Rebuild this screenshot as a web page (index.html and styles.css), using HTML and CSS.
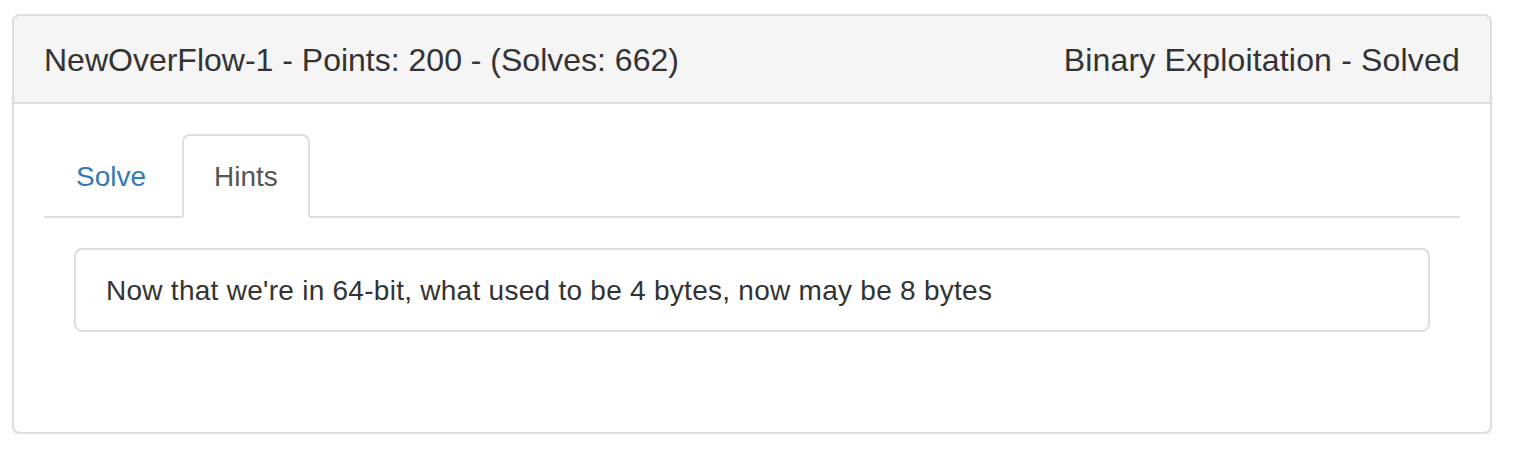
FILE: index.html
```html
<!DOCTYPE html>
<html>
<head>
<meta charset="utf-8">
<link rel="stylesheet" href="styles.css">
</head>
<body>
<div class="panel">
  <div class="panel-heading">
    <span class="title">NewOverFlow-1 - Points: 200 - (Solves: 662)</span>
    <span class="title title-right">Binary Exploitation - Solved</span>
  </div>
  <div class="panel-body">
    <ul class="nav-tabs">
      <li><a class="tab">Solve</a></li>
      <li><a class="tab active">Hints</a></li>
    </ul>
    <div class="tab-content">
      <div class="hint">Now that we're in 64-bit, what used to be 4 bytes, now may be 8 bytes</div>
    </div>
  </div>
</div>
</body>
</html>
```
FILE: styles.css
```css
html, body {
  margin: 0;
  padding: 0;
  background: #fff;
}
body {
  font-family: "Liberation Sans", Arial, Helvetica, sans-serif;
  color: #333;
  font-size: 28px;
  line-height: 40px;
}
.panel {
  margin: 14px 0 0 12px;
  width: 1480px;
  height: 420px;
  box-sizing: border-box;
  border: 2px solid #ddd;
  border-radius: 8px;
  box-shadow: 0 2px 2px rgba(0,0,0,0.05);
  background: #fff;
}
.panel-heading {
  display: flex;
  justify-content: space-between;
  align-items: center;
  background: #f5f5f5;
  border-bottom: 2px solid #ddd;
  border-radius: 6px 6px 0 0;
  padding: 21px 30px 19px 30px;
  height: 46px;
}
.title {
  font-size: 32px;
  line-height: 46px;
  color: #333;
}
.title-right {
  letter-spacing: 0.18px;
}
.panel-body {
  padding: 30px;
}
.nav-tabs {
  list-style: none;
  margin: 0;
  padding: 0;
  display: flex;
  border-bottom: 2px solid #ddd;
}
.nav-tabs li {
  margin-bottom: -2px;
  margin-right: 4px;
}
.tab {
  display: block;
  padding: 21px 30px 19px 30px;
  border: 2px solid transparent;
  border-radius: 8px 8px 0 0;
  color: #337ab7;
  line-height: 40px;
}
.tab.active {
  color: #555;
  background: #fff;
  border-color: #ddd;
  border-bottom-color: #fff;
}
.tab-content {
  padding: 30px 30px 0 30px;
}
.hint {
  border: 2px solid #ddd;
  border-radius: 8px;
  padding: 21px 30px 19px 30px;
  line-height: 40px;
  color: #333;
  letter-spacing: 0.27px;
}
```
